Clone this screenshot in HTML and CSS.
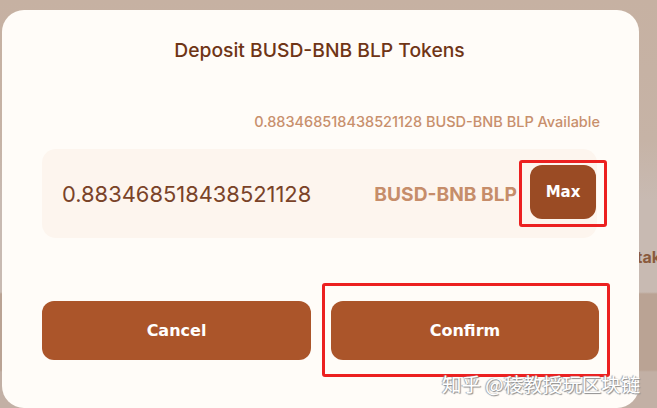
FILE: index.html
```html
<!DOCTYPE html>
<html lang="en">
<head>
    <meta charset="UTF-8">
    <meta name="viewport" content="width=device-width, initial-scale=1.0">
    <title>Deposit BUSD-BNB BLP Tokens</title>
    <link rel="stylesheet" href="styles.css">
</head>
<body>
    <span class="behind">Stake</span>
    <div class="modal">
        <h1>Deposit BUSD-BNB BLP Tokens</h1>
        <p class="available">0.883468518438521128 BUSD-BNB BLP Available</p>
        <div class="input-box">
            <span class="amount">0.883468518438521128</span>
            <span class="token">BUSD-BNB BLP</span>
            <span class="mark mark-max"><button class="max">Max</button></span>
        </div>
        <div class="actions">
            <button class="btn">Cancel</button>
            <span class="mark mark-confirm"><button class="btn">Confirm</button></span>
        </div>
        <span class="watermark">知乎 @稜教授玩区块链</span>
    </div>
</body>
</html>
```

FILE: styles.css
```css
body {
    margin: 0;
    padding: 10px 0 0 2px;
    height: 408px;
    box-sizing: border-box;
    overflow: hidden;
    position: relative;
    font-family: Inter, "Noto Sans", sans-serif;
    background: linear-gradient(to bottom, #c6b1a2 0, #c6b3a6 140px, #c8bab2 200px, #c8bab2 292px, #baa394 294px, #baa394 370px, #c2b0a5 372px);
}
.behind {
    position: absolute;
    left: 626px;
    top: 247px;
    font-size: 16px;
    font-weight: 700;
    color: #8a5a3e;
}
.modal {
    position: relative;
    width: 637px;
    height: 398px;
    background: #fffcf8;
    border-radius: 22px;
    box-sizing: border-box;
    padding: 28px 42px 0 40px;
    display: flex;
    flex-direction: column;
}
h1 {
    margin: 0;
    text-align: center;
    font-size: 19.3px;
    font-weight: 500;
    color: #6f3516;
    line-height: 24px;
}
.available {
    margin: 51px -3px 0 0;
    text-align: right;
    font-size: 14.5px;
    font-weight: 500;
    color: #c88f6c;
    line-height: 18px;
}
.input-box {
    margin-top: 18px;
    height: 89px;
    background: #fdf5ee;
    border-radius: 14px;
    display: flex;
    align-items: center;
    padding: 0 1px 0 20px;
}
.amount {
    font-size: 21.9px;
    color: #7a4328;
    flex: 1;
}
.token {
    font-size: 19.2px;
    font-weight: 700;
    color: #c68d6a;
    margin-right: 2px;
}
.mark {
    border: 3px solid #ec2020;
    border-radius: 3px;
}
.mark-max {
    padding: 2px 8px 5px 8px;
    margin-right: -11px;
}
.max {
    width: 66px;
    height: 54px;
    border: none;
    border-radius: 12px;
    background: #9a4b24;
    color: #fff;
    font-family: "DejaVu Sans", sans-serif;
    font-weight: 700;
    font-size: 15px;
}
.actions {
    margin-top: 45px;
    display: flex;
    align-items: center;
    gap: 11px;
}
.btn {
    flex-shrink: 0;
    width: 269px;
    height: 59px;
    border: none;
    border-radius: 12px;
    background: #ab552a;
    color: #fff;
    font-family: "DejaVu Sans", sans-serif;
    font-weight: 700;
    font-size: 16px;
}
.mark-confirm {
    flex-shrink: 0;
    padding: 15px 8px 14px 6px;
}
.mark-confirm .btn {
    display: block;
    width: 268px;
}
.watermark {
    position: absolute;
    left: 440px;
    top: 359px;
    white-space: nowrap;
    font-family: "Noto Sans CJK SC", sans-serif;
    font-size: 19.5px;
    color: #fff;
    text-shadow: 1px 1px 1px #8a8a8a, -1px 0 1px #9a9a9a;
}
```
